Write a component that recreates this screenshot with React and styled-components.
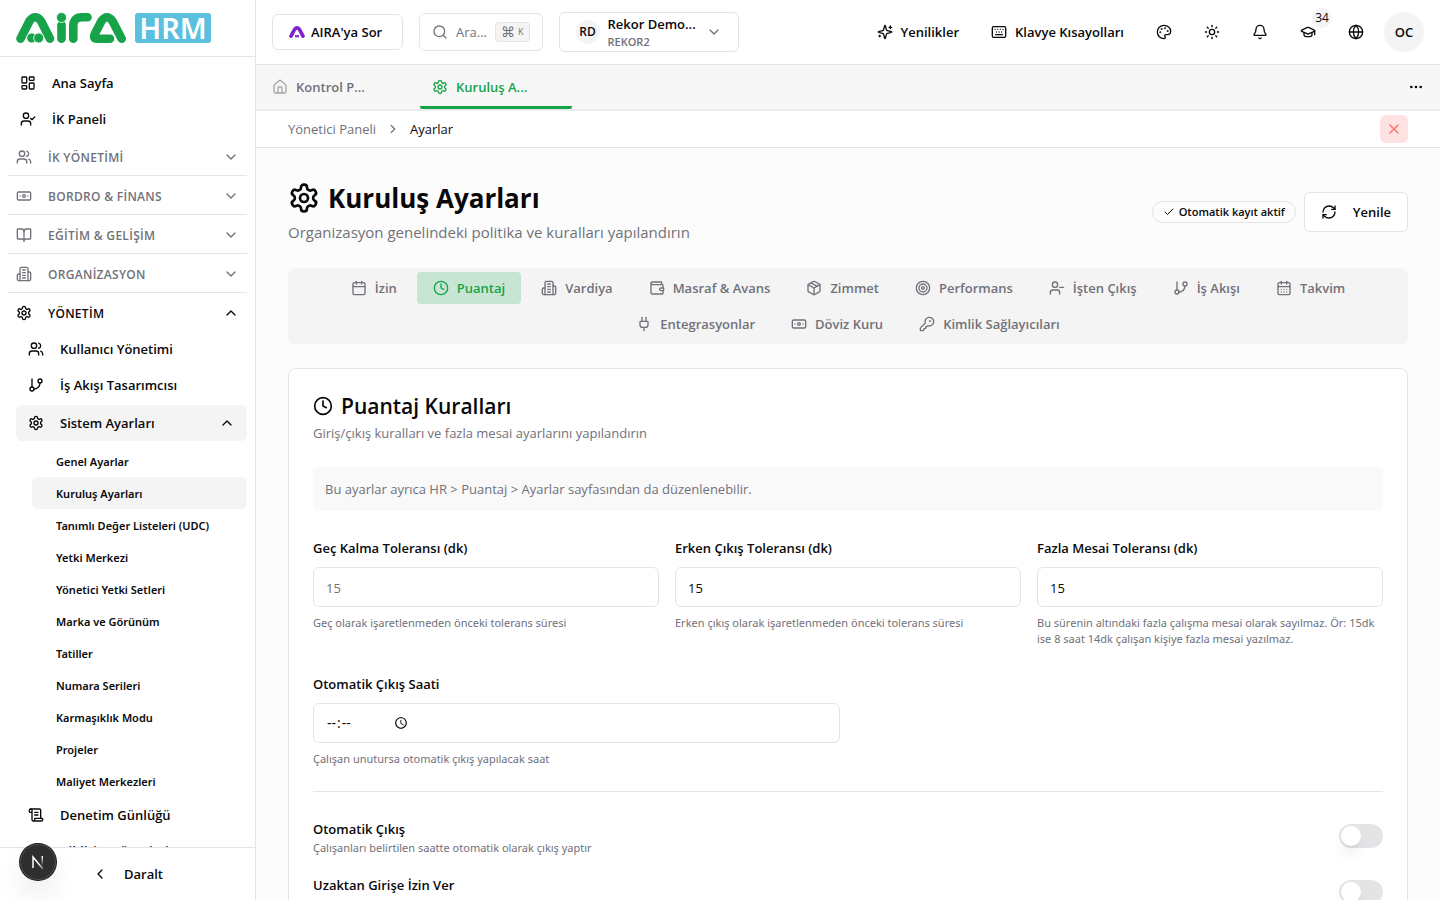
import React, { useState } from "react";
import styled, { createGlobalStyle } from "styled-components";
import {
  Banknote,
  Bell,
  BookOpen,
  Calendar,
  CalendarDays,
  Check,
  ChevronDown,
  ChevronLeft,
  ChevronRight,
  ChevronUp,
  Clock,
  Ellipsis,
  GitBranch,
  Globe,
  GraduationCap,
  House,
  KeyRound,
  Keyboard,
  LayoutDashboard,
  Package,
  Palette,
  Plug,
  RefreshCw,
  ScrollText,
  Search,
  Sun,
  Target,
  UserCheck,
  UserMinus,
  Users,
  Wallet,
  X,
} from "lucide-react";

const LineIcon = ({ size = 16, children }) => (
  <svg
    width={size}
    height={size}
    viewBox="0 0 24 24"
    fill="none"
    stroke="currentColor"
    strokeWidth="2"
    strokeLinecap="round"
    strokeLinejoin="round"
    aria-hidden="true"
  >
    {children}
  </svg>
);

const Settings = ({ size }) => (
  <LineIcon size={size}>
    <path d="M12.22 2h-.44a2 2 0 0 0-2 2v.18a2 2 0 0 1-1 1.73l-.43.25a2 2 0 0 1-2 0l-.15-.08a2 2 0 0 0-2.73.73l-.22.38a2 2 0 0 0 .73 2.73l.15.1a2 2 0 0 1 1 1.72v.51a2 2 0 0 1-1 1.74l-.15.09a2 2 0 0 0-.73 2.73l.22.38a2 2 0 0 0 2.73.73l.15-.08a2 2 0 0 1 2 0l.43.25a2 2 0 0 1 1 1.73V20a2 2 0 0 0 2 2h.44a2 2 0 0 0 2-2v-.18a2 2 0 0 1 1-1.73l.43-.25a2 2 0 0 1 2 0l.15.08a2 2 0 0 0 2.73-.73l.22-.39a2 2 0 0 0-.73-2.73l-.15-.08a2 2 0 0 1-1-1.74v-.5a2 2 0 0 1 1-1.74l.15-.09a2 2 0 0 0 .73-2.73l-.22-.38a2 2 0 0 0-2.73-.73l-.15.08a2 2 0 0 1-2 0l-.43-.25a2 2 0 0 1-1-1.73V4a2 2 0 0 0-2-2z" />
    <circle cx="12" cy="12" r="3" />
  </LineIcon>
);

const Building = ({ size }) => (
  <LineIcon size={size}>
    <path d="M6 22V4a2 2 0 0 1 2-2h8a2 2 0 0 1 2 2v18Z" />
    <path d="M6 12H4a2 2 0 0 0-2 2v6a2 2 0 0 0 2 2h2" />
    <path d="M18 9h2a2 2 0 0 1 2 2v9a2 2 0 0 1-2 2h-2" />
    <path d="M10 6h4M10 10h4M10 14h4M10 18h4" />
  </LineIcon>
);

const Sparkles = ({ size }) => (
  <LineIcon size={size}>
    <path d="M9.937 15.5A2 2 0 0 0 8.5 14.063l-6.135-1.582a.5.5 0 0 1 0-.962L8.5 9.936A2 2 0 0 0 9.937 8.5l1.582-6.135a.5.5 0 0 1 .963 0L14.063 8.5A2 2 0 0 0 15.5 9.937l6.135 1.581a.5.5 0 0 1 0 .964L15.5 14.063a2 2 0 0 0-1.437 1.437l-1.582 6.135a.5.5 0 0 1-.963 0z" />
    <path d="M20 3v4M22 5h-4M4 17v2M5 18H3" />
  </LineIcon>
);

const groups = [
  { label: "İK YÖNETİMİ", icon: Users },
  { label: "BORDRO & FİNANS", icon: Banknote },
  { label: "EĞİTİM & GELİŞİM", icon: BookOpen },
  { label: "ORGANİZASYON", icon: Building },
];

const systemLinks = [
  "Genel Ayarlar",
  "Kuruluş Ayarları",
  "Tanımlı Değer Listeleri (UDC)",
  "Yetki Merkezi",
  "Yönetici Yetki Setleri",
  "Marka ve Görünüm",
  "Tatiller",
  "Numara Serileri",
  "Karmaşıklık Modu",
  "Projeler",
  "Maliyet Merkezleri",
];

const settingTabs = [
  { label: "İzin", icon: Calendar },
  { label: "Puantaj", icon: Clock },
  { label: "Vardiya", icon: Building },
  { label: "Masraf & Avans", icon: Wallet },
  { label: "Zimmet", icon: Package },
  { label: "Performans", icon: Target },
  { label: "İşten Çıkış", icon: UserMinus },
  { label: "İş Akışı", icon: GitBranch },
  { label: "Takvim", icon: CalendarDays },
  { label: "Entegrasyonlar", icon: Plug },
  { label: "Döviz Kuru", icon: Banknote },
  { label: "Kimlik Sağlayıcıları", icon: KeyRound },
];

const tolerances = [
  {
    id: "late",
    label: "Geç Kalma Toleransı (dk)",
    placeholder: "15",
    help: "Geç olarak işaretlenmeden önceki tolerans süresi",
  },
  {
    id: "early",
    label: "Erken Çıkış Toleransı (dk)",
    value: "15",
    help: "Erken çıkış olarak işaretlenmeden önceki tolerans süresi",
  },
  {
    id: "overtime",
    label: "Fazla Mesai Toleransı (dk)",
    value: "15",
    help: "Bu sürenin altındaki fazla çalışma mesai olarak sayılmaz. Ör: 15dk ise 8 saat 14dk çalışan kişiye fazla mesai yazılmaz.",
  },
];

const switches = [
  {
    id: "auto",
    label: "Otomatik Çıkış",
    help: "Çalışanları belirtilen saatte otomatik olarak çıkış yaptır",
  },
  { id: "remote", label: "Uzaktan Girişe İzin Ver" },
];

const BrandLogo = () => (
  <svg width="196" height="32" viewBox="0 0 196 32" overflow="visible" role="img" aria-label="AIRA HRM">
    <g fill="none" stroke="#16a34a" strokeWidth="8.600" strokeLinecap="round" strokeLinejoin="round">
      <path d="M4.500 26.700 L13.500 9 Q19.300 1.500 25 9 L34 26.700" />
      <path d="M45.500 13 V26.700" />
      <path d="M57.300 26.700 V14 Q57.300 5.300 66 5.300 H71.500" />
      <path d="M105.700 26.700 L96.500 9 Q91 1.500 85.500 9 L79 21.500 Q76.500 26.700 81 26.700 H94" />
    </g>
    <g fill="#16a34a" stroke="#fff" strokeWidth="0.800">
      <circle cx="45.500" cy="5.500" r="5" />
      <circle cx="15.700" cy="26" r="5" />
      <circle cx="22.700" cy="26" r="5" />
    </g>
    <rect x="119" y="1" width="76" height="30" rx="3" fill="#5bc0de" />
    <text
      x="157"
      y="27"
      fill="#fff"
      fontFamily="Noto Sans, sans-serif"
      fontSize="29"
      fontWeight="600"
      textAnchor="middle"
    >
      HRM
    </text>
  </svg>
);

const AskMark = () => (
  <svg width="16" height="12" viewBox="0 0 16 12" aria-hidden="true">
    <path
      d="M2 10.200 L5.500 3.500 Q8 0.200 10.500 3.500 L14 10.200"
      fill="none"
      stroke="#7e22ce"
      strokeWidth="3.600"
      strokeLinecap="round"
    />
    <path d="M6 10.200 H10" stroke="#9333ea" strokeWidth="2.400" />
  </svg>
);

const App = () => {
  const [activeTab, setActiveTab] = useState("Puantaj");
  const [enabled, setEnabled] = useState({});

  return (
    <>
      <GlobalStyle />
      <Shell>
        <Sidebar>
          <Brand>
            <BrandLogo />
          </Brand>
          <Nav>
            <NavLink href="#">
              <LayoutDashboard size={16} />
              Ana Sayfa
            </NavLink>
            <NavLink href="#">
              <UserCheck size={16} />
              İK Paneli
            </NavLink>
            {groups.map(({ label, icon: Icon }) => (
              <GroupButton key={label} type="button">
                <Icon size={16} />
                <span>{label}</span>
                <ChevronDown size={16} />
              </GroupButton>
            ))}
            <GroupButton type="button" $open>
              <Settings size={16} />
              <span>YÖNETİM</span>
              <ChevronUp size={16} />
            </GroupButton>
            <SubNav>
              <NavLink href="#">
                <Users size={16} />
                Kullanıcı Yönetimi
              </NavLink>
              <NavLink href="#">
                <GitBranch size={16} />
                İş Akışı Tasarımcısı
              </NavLink>
              <SectionButton type="button">
                <Settings size={16} />
                <span>Sistem Ayarları</span>
                <ChevronUp size={16} />
              </SectionButton>
              <LeafList>
                {systemLinks.map((label) => (
                  <Leaf key={label} href="#" $active={label === "Kuruluş Ayarları"}>
                    {label}
                  </Leaf>
                ))}
              </LeafList>
              <NavLink href="#">
                <ScrollText size={16} />
                Denetim Günlüğü
              </NavLink>
              <NavLink href="#">
                <Bell size={16} />
                Bildirim Yönetimi
              </NavLink>
            </SubNav>
          </Nav>
          <SideFooter>
            <CollapseButton type="button">
              <ChevronLeft size={16} />
              Daralt
            </CollapseButton>
          </SideFooter>
        </Sidebar>

        <Content>
          <TopBar>
            <AskButton type="button">
              <AskMark />
              AIRA'ya Sor
            </AskButton>
            <SearchButton type="button">
              <Search size={16} />
              Ara...
              <Kbd>
                <b>⌘</b>K
              </Kbd>
            </SearchButton>
            <OrgButton type="button">
              <OrgInitials>RD</OrgInitials>
              <OrgText>
                <strong>Rekor Demo...</strong>
                <small>REKOR2</small>
              </OrgText>
              <ChevronDown size={16} />
            </OrgButton>
            <Actions>
              <GhostButton type="button">
                <Sparkles size={16} />
                Yenilikler
              </GhostButton>
              <GhostButton type="button">
                <Keyboard size={16} />
                Klavye Kısayolları
              </GhostButton>
              <IconButton type="button" aria-label="Tema">
                <Palette size={16} />
              </IconButton>
              <IconButton type="button" aria-label="Aydınlık mod">
                <Sun size={16} />
              </IconButton>
              <IconButton type="button" aria-label="Bildirimler">
                <Bell size={16} />
              </IconButton>
              <IconButton type="button" aria-label="Eğitimler">
                <GraduationCap size={16} />
                <Count>34</Count>
              </IconButton>
              <IconButton type="button" aria-label="Dil">
                <Globe size={16} />
              </IconButton>
              <Avatar type="button">OC</Avatar>
            </Actions>
          </TopBar>

          <PageTabs>
            <PageTab type="button">
              <House size={16} />
              Kontrol P...
            </PageTab>
            <PageTab type="button" $active>
              <Settings size={16} />
              Kuruluş A...
            </PageTab>
            <MoreButton type="button" aria-label="Diğer sekmeler">
              <Ellipsis size={16} />
            </MoreButton>
          </PageTabs>

          <Crumbs aria-label="Konum">
            <a href="#">Yönetici Paneli</a>
            <ChevronRight size={14} />
            <span>Ayarlar</span>
            <CloseButton type="button" aria-label="Kapat">
              <X size={16} />
            </CloseButton>
          </Crumbs>

          <Main>
            <PageHeader>
              <div>
                <Title>
                  <Settings size={32} />
                  Kuruluş Ayarları
                </Title>
                <Subtitle>Organizasyon genelindeki politika ve kuralları yapılandırın</Subtitle>
              </div>
              <HeaderActions>
                <Badge>
                  <Check size={12} />
                  Otomatik kayıt aktif
                </Badge>
                <RefreshButton type="button">
                  <RefreshCw size={16} />
                  Yenile
                </RefreshButton>
              </HeaderActions>
            </PageHeader>

            <TabList role="tablist">
              {settingTabs.map(({ label, icon: Icon }) => (
                <Tab
                  key={label}
                  type="button"
                  role="tab"
                  aria-selected={activeTab === label}
                  $active={activeTab === label}
                  onClick={() => setActiveTab(label)}
                >
                  <Icon size={16} />
                  {label}
                </Tab>
              ))}
            </TabList>

            <Card>
              <CardTitle>
                <Clock size={20} />
                Puantaj Kuralları
              </CardTitle>
              <CardText>Giriş/çıkış kuralları ve fazla mesai ayarlarını yapılandırın</CardText>
              <Notice>
                Bu ayarlar ayrıca HR &gt; Puantaj &gt; Ayarlar sayfasından da düzenlenebilir.
              </Notice>

              <FieldGrid $columns={3}>
                {tolerances.map((field) => (
                  <Field key={field.id}>
                    <Label htmlFor={field.id}>{field.label}</Label>
                    <Input id={field.id} placeholder={field.placeholder} defaultValue={field.value} />
                    <Help>{field.help}</Help>
                  </Field>
                ))}
              </FieldGrid>
              <FieldGrid $columns={2}>
                <Field>
                  <Label htmlFor="checkout">Otomatik Çıkış Saati</Label>
                  <TimeInput id="checkout" type="time" />
                  <Help>Çalışan unutursa otomatik çıkış yapılacak saat</Help>
                </Field>
              </FieldGrid>

              <SwitchList>
                {switches.map((item) => (
                  <SwitchRow key={item.id}>
                    <div>
                      <Label htmlFor={item.id}>{item.label}</Label>
                      <Help>{item.help}</Help>
                    </div>
                    <Switch
                      id={item.id}
                      type="checkbox"
                      role="switch"
                      checked={!!enabled[item.id]}
                      onChange={(e) => setEnabled({ ...enabled, [item.id]: e.target.checked })}
                    />
                  </SwitchRow>
                ))}
              </SwitchList>
            </Card>
          </Main>
        </Content>

        <DevBadge type="button" aria-label="Geliştirici araçları">
          <svg width="14" height="14" viewBox="0 0 14 14" fill="none">
            <defs>
              <linearGradient id="fadeA" x1="0" y1="0" x2="14" y2="14" gradientUnits="userSpaceOnUse">
                <stop offset="0.6" stopColor="#fff" />
                <stop offset="1" stopColor="#fff" stopOpacity="0.2" />
              </linearGradient>
              <linearGradient id="fadeB" x1="0" y1="1" x2="0" y2="11" gradientUnits="userSpaceOnUse">
                <stop stopColor="#fff" />
                <stop offset="1" stopColor="#fff" stopOpacity="0" />
              </linearGradient>
            </defs>
            <path d="M2 13 V2 L12 14" stroke="url(#fadeA)" strokeWidth="1.500" />
            <path d="M11.250 1 V10" stroke="url(#fadeB)" strokeWidth="1.500" />
          </svg>
        </DevBadge>
      </Shell>
    </>
  );
};

const GlobalStyle = createGlobalStyle`
  * {
    box-sizing: border-box;
  }
  body {
    margin: 0;
    color: #09090b;
    background: #fcfcfc;
    font-family: "Open Sans", "Noto Sans", sans-serif;
    font-size: 13px;
    line-height: 20px;
  }
  h1, h2, p {
    margin: 0;
  }
  a {
    color: inherit;
    text-decoration: none;
  }
  button, input {
    font: inherit;
    color: inherit;
  }
  button {
    display: inline-flex;
    align-items: center;
    padding: 0;
    border: 0;
    background: none;
    cursor: pointer;
    white-space: nowrap;
  }
  svg {
    flex-shrink: 0;
  }
`;

const Shell = styled.div`
  display: flex;
  height: 100vh;
  overflow: hidden;
`;

const Sidebar = styled.aside`
  display: flex;
  flex-direction: column;
  flex-shrink: 0;
  width: 256px;
  background: #fff;
  border-right: 1px solid #e4e4e7;
`;

const Brand = styled.div`
  flex-shrink: 0;
  height: 57px;
  padding: 12px 16px;
  border-bottom: 1px solid #e4e4e7;
`;

const Nav = styled.nav`
  display: flex;
  flex-direction: column;
  flex: 1;
  min-height: 0;
  overflow: hidden;
  padding: 8px;
`;

const NavLink = styled.a`
  display: flex;
  align-items: center;
  flex-shrink: 0;
  gap: 16px;
  height: 36px;
  padding: 0 12px;
  font-weight: 600;
`;

const GroupButton = styled.button`
  flex-shrink: 0;
  gap: 16px;
  height: ${({ $open }) => ($open ? "38px" : "39px")};
  padding: 2px 8px 0;
  border-bottom: ${({ $open }) => ($open ? "0" : "1px solid #e4e4e7")};
  color: ${({ $open }) => ($open ? "#09090b" : "#71717a")};
  font-size: 12px;
  font-weight: 600;
  letter-spacing: 0.025em;
  span {
    flex: 1;
    padding-top: 2px;
    text-align: left;
  }
`;

const SubNav = styled.div`
  display: flex;
  flex-direction: column;
  padding-left: 8px;
`;

const SectionButton = styled.button`
  flex-shrink: 0;
  gap: 16px;
  height: 36px;
  margin-top: 2px;
  padding: 0 12px;
  border-radius: 6px;
  background: #f4f4f5;
  font-weight: 600;
  span {
    flex: 1;
    text-align: left;
  }
`;

const LeafList = styled.div`
  display: flex;
  flex-direction: column;
  margin: 4px 0 0 16px;
`;

const Leaf = styled.a`
  display: flex;
  align-items: center;
  height: 32px;
  padding: 2px 24px 0;
  border-radius: 6px;
  background: ${({ $active }) => ($active ? "#f4f4f5" : "transparent")};
  font-family: "Noto Sans", sans-serif;
  font-size: 11px;
  font-weight: 600;
`;

const SideFooter = styled.div`
  display: flex;
  justify-content: center;
  flex-shrink: 0;
  padding: 8px;
  border-top: 1px solid #e4e4e7;
`;

const CollapseButton = styled.button`
  gap: 16px;
  height: 36px;
  font-weight: 600;
`;

const Content = styled.div`
  display: flex;
  flex-direction: column;
  flex: 1;
  min-width: 0;
`;

const TopBar = styled.header`
  display: flex;
  align-items: center;
  flex-shrink: 0;
  gap: 16px;
  height: 65px;
  padding: 0 16px;
  background: #fff;
  border-bottom: 1px solid #e4e4e7;
`;

const AskButton = styled.button`
  gap: 6px;
  min-width: 131px;
  height: 36px;
  padding: 0 16px;
  border: 1px solid #e4e4e7;
  border-radius: 6px;
  font-weight: 600;
`;

const SearchButton = styled.button`
  gap: 8px;
  height: 38px;
  padding: 0 12px;
  border: 1px solid #e4e4e7;
  border-radius: 6px;
  color: #71717a;
`;

const Kbd = styled.kbd`
  display: inline-flex;
  align-items: center;
  gap: 3px;
  height: 20px;
  padding: 0 5px;
  border: 1px solid #e4e4e7;
  border-radius: 4px;
  background: #f4f4f5;
  font-family: inherit;
  font-size: 9px;
  b {
    font-family: "DejaVu Sans", sans-serif;
    font-size: 14px;
    font-weight: 400;
  }
`;

const OrgButton = styled.button`
  gap: 8px;
  width: 180px;
  height: 40px;
  padding: 0 16px;
  border: 1px solid #e4e4e7;
  border-radius: 6px;
  > svg {
    margin-left: auto;
    color: #71717a;
  }
`;

const OrgInitials = styled.span`
  display: flex;
  align-items: center;
  justify-content: center;
  width: 24px;
  height: 24px;
  border-radius: 50%;
  background: #f4f4f5;
  font-size: 12px;
  font-weight: 600;
`;

const OrgText = styled.span`
  display: flex;
  flex-direction: column;
  padding-top: 2px;
  text-align: left;
  font-weight: 600;
  line-height: 18px;
  strong {
    font-weight: 600;
  }
  small {
    color: #71717a;
    font-size: 11px;
  }
`;

const Actions = styled.div`
  display: flex;
  align-items: center;
  gap: 8px;
  margin-left: auto;
`;

const GhostButton = styled.button`
  gap: 8px;
  height: 36px;
  padding: 0 12px;
  font-weight: 600;
`;

const IconButton = styled.button`
  position: relative;
  justify-content: center;
  width: 40px;
  height: 40px;
`;

const Count = styled.span`
  position: absolute;
  top: -4px;
  right: -4px;
  min-width: 20px;
  border-radius: 10px;
  background: #f4f4f5;
  font-size: 12px;
`;

const Avatar = styled.button`
  justify-content: center;
  width: 40px;
  height: 40px;
  border-radius: 50%;
  background: #f4f4f5;
  font-weight: 600;
`;

const PageTabs = styled.div`
  display: flex;
  align-items: center;
  flex-shrink: 0;
  gap: 8px;
  height: 46px;
  padding: 0 16px 0 4px;
  background: #f7f7f7;
  border-bottom: 2px solid #ececee;
`;

const PageTab = styled.button`
  gap: 8px;
  width: 152px;
  height: 44px;
  padding: 0 12px;
  border-top: 3px solid transparent;
  border-bottom: 3px solid ${({ $active }) => ($active ? "#16a34a" : "transparent")};
  border-radius: 2px;
  color: ${({ $active }) => ($active ? "#16a34a" : "#71717a")};
  font-weight: 600;
  svg {
    opacity: ${({ $active }) => ($active ? 1 : 0.6)};
  }
`;

const MoreButton = styled.button`
  margin-left: auto;
`;

const Crumbs = styled.nav`
  display: flex;
  align-items: center;
  flex-shrink: 0;
  gap: 10px;
  height: 37px;
  padding: 0 32px;
  background: #fff;
  border-bottom: 1px solid #e4e4e7;
  color: #71717a;
  span {
    color: #09090b;
  }
`;

const CloseButton = styled.button`
  justify-content: center;
  width: 28px;
  height: 28px;
  margin-left: auto;
  border-radius: 6px;
  background: #fee2e2;
  color: #f87171;
`;

const Main = styled.main`
  flex: 1;
  min-height: 0;
  overflow: hidden;
  padding: 32px;
`;

const PageHeader = styled.div`
  display: flex;
  align-items: center;
  justify-content: space-between;
  margin-bottom: 24px;
`;

const Title = styled.h1`
  display: flex;
  align-items: center;
  gap: 8px;
  font-size: 26px;
  font-weight: 700;
  line-height: 36px;
`;

const Subtitle = styled.p`
  padding-top: 4px;
  color: #71717a;
  font-size: 15px;
  line-height: 24px;
`;

const HeaderActions = styled.div`
  display: flex;
  align-items: center;
  gap: 8px;
`;

const Badge = styled.span`
  display: inline-flex;
  align-items: center;
  gap: 4px;
  height: 22px;
  padding: 0 10px;
  border: 1px solid #e4e4e7;
  border-radius: 11px;
  font-size: 11px;
  font-weight: 600;
`;

const RefreshButton = styled.button`
  gap: 16px;
  height: 40px;
  padding: 0 16px;
  border: 1px solid #e4e4e7;
  border-radius: 6px;
  background: #fff;
  font-weight: 600;
`;

const TabList = styled.div`
  display: flex;
  flex-wrap: wrap;
  justify-content: center;
  gap: 4px;
  margin-bottom: 24px;
  padding: 4px;
  border-radius: 6px;
  background: #f4f4f5;
`;

const Tab = styled.button`
  gap: 8px;
  height: 32px;
  padding: 0 16px;
  border-radius: 4px;
  background: ${({ $active }) => ($active ? "#c7e5d2" : "transparent")};
  color: ${({ $active }) => ($active ? "#16a34a" : "#71717a")};
  font-weight: 600;
`;

const Card = styled.section`
  padding: 24px;
  border: 1px solid #e4e4e7;
  border-radius: 8px;
  background: #fff;
`;

const CardTitle = styled.h2`
  display: flex;
  align-items: center;
  gap: 8px;
  font-size: 21px;
  font-weight: 600;
  line-height: 26px;
`;

const CardText = styled.p`
  margin-top: 4px;
  color: #71717a;
`;

const Notice = styled.p`
  margin: 24px 0;
  padding: 12px;
  border-radius: 6px;
  background: #f9f9f9;
  color: #71717a;
`;

const FieldGrid = styled.div`
  display: grid;
  grid-template-columns: repeat(${({ $columns }) => $columns}, 1fr);
  gap: 16px;
  margin-bottom: 24px;
`;

const Field = styled.div`
  display: flex;
  flex-direction: column;
  gap: 8px;
`;

const Label = styled.label`
  display: block;
  padding-top: 2px;
  font-weight: 600;
  line-height: 22px;
`;

const Input = styled.input`
  width: 100%;
  height: 40px;
  padding: 2px 12px 0;
  border: 1px solid #e4e4e7;
  border-radius: 6px;
  background: #fff;
  &::placeholder {
    color: #71717a;
  }
`;

const TimeInput = styled(Input)`
  padding-top: 0;
  font-size: 14px;
  &::-webkit-datetime-edit {
    flex: 0 0 auto;
    width: 48px;
    min-width: 0;
  }
  &::-webkit-datetime-edit-ampm-field {
    display: none;
  }
  &::-webkit-calendar-picker-indicator {
    margin-inline-start: 0;
  }
`;

const Help = styled.p`
  min-height: 16px;
  color: #71717a;
  font-family: "Noto Sans", sans-serif;
  font-size: 11px;
  line-height: 16px;
`;

const SwitchList = styled.div`
  display: flex;
  flex-direction: column;
  gap: 16px;
  padding-top: 24px;
  border-top: 1px solid #e4e4e7;
`;

const SwitchRow = styled.div`
  display: flex;
  align-items: center;
  justify-content: space-between;
`;

const Switch = styled.input`
  display: flex;
  flex-shrink: 0;
  width: 44px;
  height: 24px;
  margin: 0;
  padding: 2px;
  border-radius: 12px;
  background: ${({ checked }) => (checked ? "#16a34a" : "#e4e4e7")};
  appearance: none;
  cursor: pointer;
  &::before {
    content: "";
    width: 20px;
    height: 20px;
    margin-left: ${({ checked }) => (checked ? "20px" : "0")};
    border-radius: 50%;
    background: #fff;
    box-shadow: 0 10px 15px -3px rgba(0, 0, 0, 0.1), 0 4px 6px -4px rgba(0, 0, 0, 0.1);
  }
`;

const DevBadge = styled.button`
  position: fixed;
  bottom: 20px;
  left: 20px;
  justify-content: center;
  width: 36px;
  height: 36px;
  border-radius: 50%;
  background: #2e2e2e;
  box-shadow: 0 0 0 1px #171717, inset 0 0 0 1px #4d4d4d, 0 16px 32px -8px rgba(0, 0, 0, 0.24);
`;

export default App;
